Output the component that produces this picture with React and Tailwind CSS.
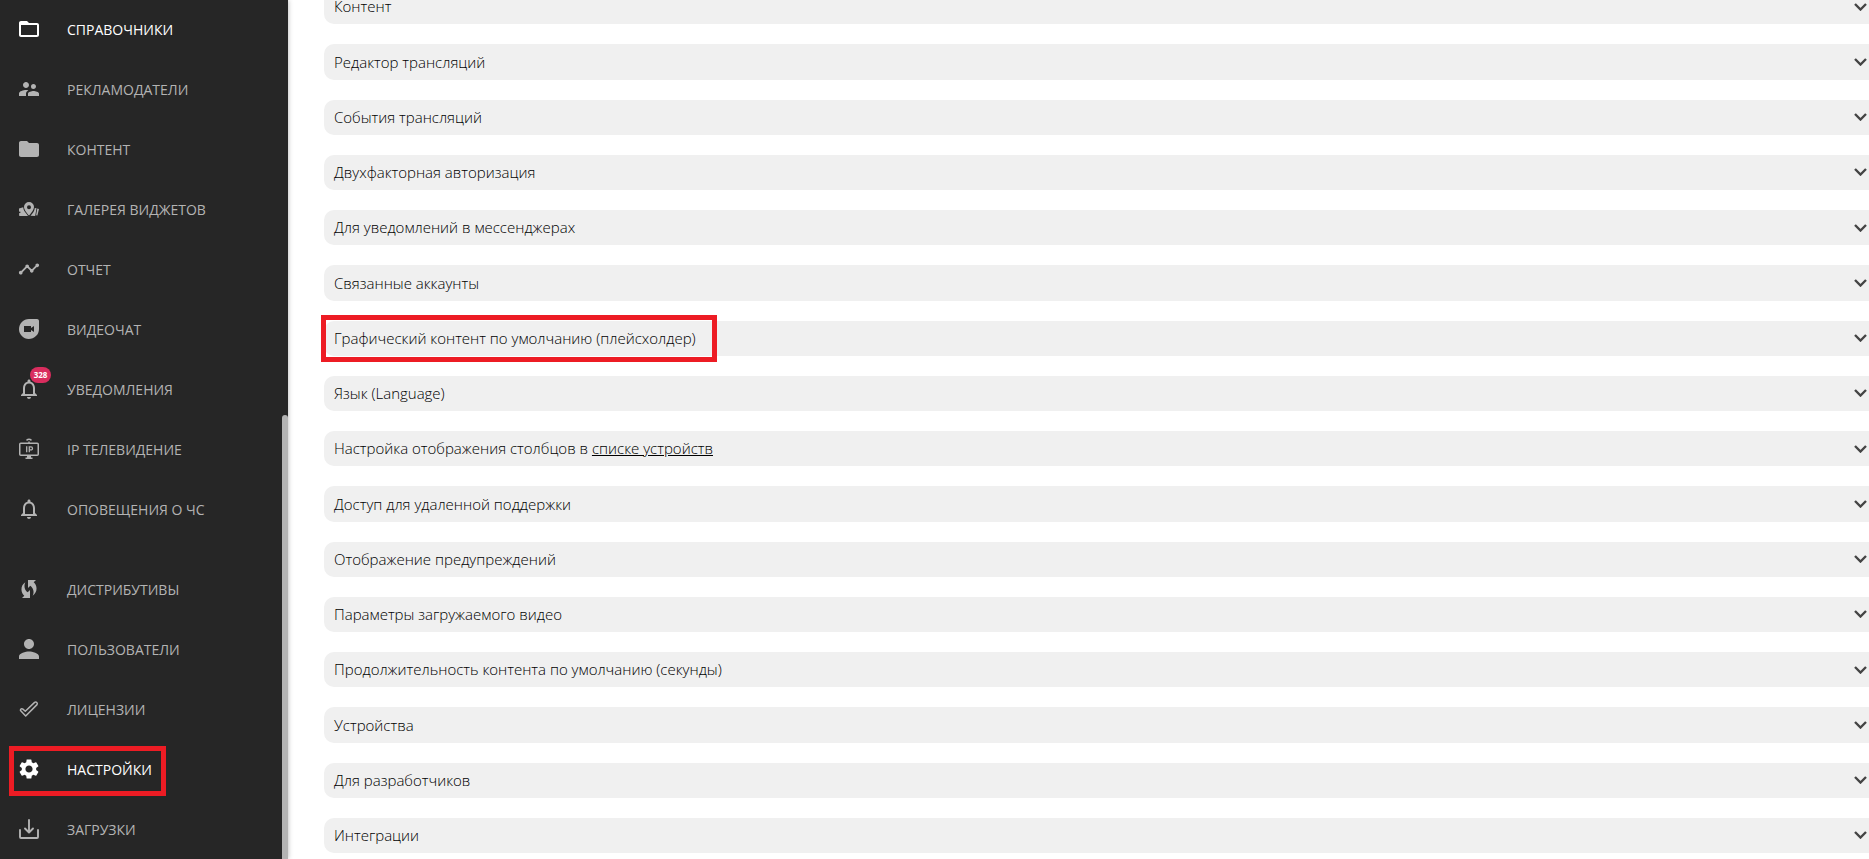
import React from 'react';
import { MdDuo, MdFolder, MdNotificationsNone, MdPerson, MdSettings, MdSupervisorAccount, MdTimeline, MdWifiProtectedSetup } from 'react-icons/md';

const FolderOutlineIcon = (props) => (
  <svg viewBox="0 0 24 24" fill="currentColor" {...props}>
    <path d="M20 6h-8l-2-2H4c-1.1 0-2 .9-2 2v12c0 1.1.9 2 2 2h16c1.1 0 2-.9 2-2V8c0-1.1-.9-2-2-2zm0 12H4V8h16v10z" />
  </svg>
);

const GalleryIcon = (props) => (
  <svg viewBox="0 0 24 24" fill="currentColor" {...props}>
    <path fillRule="evenodd" d="M12 5a5 5 0 0 0-5 5c0 3.500 5 8.500 5 8.500s5-5 5-8.500a5 5 0 0 0-5-5zm0 3.200a2 2 0 1 1 0 4 2 2 0 0 1 0-4z" />
    <path d="M2 11.500l4.200-1.200c.2 2.700 1.600 4.700 3.600 7l1.200 1.700H2.300l-.3-2.500 2-1.500-2-.5z" />
    <path d="M17.800 11l1.700.3-1.300 7.700-4.700-.2C16 16 17.600 14 17.800 11zM20.300 11.500l1.700.4-1.600 6.600-1.300-.3z" />
  </svg>
);

const IpTvIcon = (props) => (
  <svg viewBox="0 0 24 24" fill="none" stroke="currentColor" strokeWidth="1.500" {...props}>
    <rect x="2.750" y="6.250" width="18.500" height="12" rx="1" />
    <path d="M12 4.500v2M9.500 3.300c1.500-1.200 3.500-1.200 5 0M8.500 21.300h7" />
    <path strokeWidth="2.500" d="M10 19.800h4" />
    <path strokeWidth="1.300" d="M9.700 9.300v6M12.300 15.300V9.900h1.700a1.500 1.500 0 0 1 0 3h-1.700" />
  </svg>
);

const LicenseIcon = (props) => (
  <svg viewBox="0 0 24 24" fill="none" stroke="currentColor" strokeWidth="1.500" strokeLinejoin="round" {...props}>
    <path d="M3.500 13.600c-.3-1.600 1.300-2.400 2.400-1.500l2.400 2.100 9.300-8.800c1.700-1 3.400.7 2.400 2.200L8.700 19z" />
  </svg>
);

const DownloadIcon = (props) => (
  <svg viewBox="0 0 24 24" fill="none" stroke="currentColor" strokeWidth="1.900" strokeLinecap="round" strokeLinejoin="round" {...props}>
    <path d="M3 13v7a1 1 0 0 0 1 1h16a1 1 0 0 0 1-1v-7M12 3v12M8 11.500l4 4 4-4" />
  </svg>
);

const MENU = [
  { label: 'Справочники', icon: FolderOutlineIcon, size: 'size-6', active: true },
  { label: 'Рекламодатели', icon: MdSupervisorAccount, size: 'size-6' },
  { label: 'Контент', icon: MdFolder, size: 'size-6' },
  { label: 'Галерея виджетов', icon: GalleryIcon, size: 'size-6' },
  { label: 'Отчет', icon: MdTimeline, size: 'size-[22px]' },
  { label: 'Видеочат', icon: MdDuo, size: 'size-6' },
  { label: 'Уведомления', icon: MdNotificationsNone, size: 'size-6', badge: 328 },
  { label: 'IP телевидение', icon: IpTvIcon, size: 'size-6' },
  { label: 'Оповещения о ЧС', icon: MdNotificationsNone, size: 'size-6' }
];

const ADMIN_MENU = [
  { label: 'Дистрибутивы', icon: MdWifiProtectedSetup, size: 'size-6' },
  { label: 'Пользователи', icon: MdPerson, size: 'size-[30px]' },
  { label: 'Лицензии', icon: LicenseIcon, size: 'size-6' },
  { label: 'Настройки', icon: MdSettings, size: 'size-6', active: true, marked: true },
  { label: 'Загрузки', icon: DownloadIcon, size: 'size-6' }
];

const SECTIONS = [
  { title: 'Контент' },
  { title: 'Редактор трансляций' },
  { title: 'События трансляций' },
  { title: 'Двухфакторная авторизация' },
  { title: 'Для уведомлений в мессенджерах' },
  { title: 'Связанные аккаунты' },
  { title: 'Графический контент по умолчанию (плейсхолдер)', marked: true },
  { title: 'Язык (Language)' },
  { title: 'Настройка отображения столбцов в', link: 'списке устройств' },
  { title: 'Доступ для удаленной поддержки' },
  { title: 'Отображение предупреждений' },
  { title: 'Параметры загружаемого видео' },
  { title: 'Продолжительность контента по умолчанию (секунды)' },
  { title: 'Устройства' },
  { title: 'Для разработчиков' },
  { title: 'Интеграции' }
];

function MenuItem({ item }) {
  const Icon = item.icon;
  return (
    <li className="relative h-[60px]">
      <a href="#" className={`flex h-full items-center pl-3.5 ${item.active ? 'text-white' : 'text-[#b3b3b3]'}`}>
        <span className="flex w-[30px] justify-center">
          <Icon className={`shrink-0 ${item.size}`} />
        </span>
        <span className="ml-[23px] text-[14px] uppercase whitespace-nowrap">{item.label}</span>
      </a>
      {item.badge && (
        <span className="absolute left-[30px] top-2 flex h-4 w-[21px] items-center justify-center rounded-full bg-[#d92d5e] text-[8px] font-bold text-white">
          {item.badge}
        </span>
      )}
      {item.marked && <span className="pointer-events-none absolute left-[9px] top-[7px] h-[50px] w-[157px] border-5 border-[#ed1c24]" />}
    </li>
  );
}

function Section({ section }) {
  return (
    <div className="relative flex flex-1 items-center justify-between rounded-l-[10px] bg-[#f0f0f0] pl-2.5">
      <p className="whitespace-nowrap">
        {section.title}
        {section.link && (
          <>
            {' '}
            <a href="#" className="underline">{section.link}</a>
          </>
        )}
      </p>
      <button type="button" aria-label={section.title} className="mr-0.5 text-[#444]">
        <svg viewBox="0 0 13 8" className="h-2 w-[13px]" fill="none" stroke="currentColor" strokeWidth="2.400">
          <path d="M1 1l5.500 5.500L12 1" />
        </svg>
      </button>
      {section.marked && <span className="pointer-events-none absolute -left-[3px] -top-1.5 h-[47px] w-[396px] border-5 border-[#ed1c24]" />}
    </div>
  );
}

export default function App() {
  return (
    <div className="flex h-screen overflow-hidden bg-white font-['Century_Gothic','Open_Sans',sans-serif]">
      <aside className="relative z-10 w-72 shrink-0 bg-[#262626] shadow-[0_0_5px_rgba(0,0,0,0.3)]">
        <nav className="-mt-px">
          <ul>
            {MENU.map(item => <MenuItem key={item.label} item={item} />)}
          </ul>
          <ul className="mt-5">
            {ADMIN_MENU.map(item => <MenuItem key={item.label} item={item} />)}
          </ul>
        </nav>
        {/* scrollbar thumb */}
        <span className="absolute right-0 top-[415px] bottom-0 w-1.5 rounded-t bg-[#b3b3b3]" />
      </aside>

      {/* the list is scrolled, its first row is cut by the top edge */}
      <main className="-mt-[11px] flex flex-1 flex-col gap-5 pb-1.5 pl-9 text-[15px] font-light text-black">
        {SECTIONS.map(section => <Section key={section.title} section={section} />)}
      </main>
    </div>
  );
}
